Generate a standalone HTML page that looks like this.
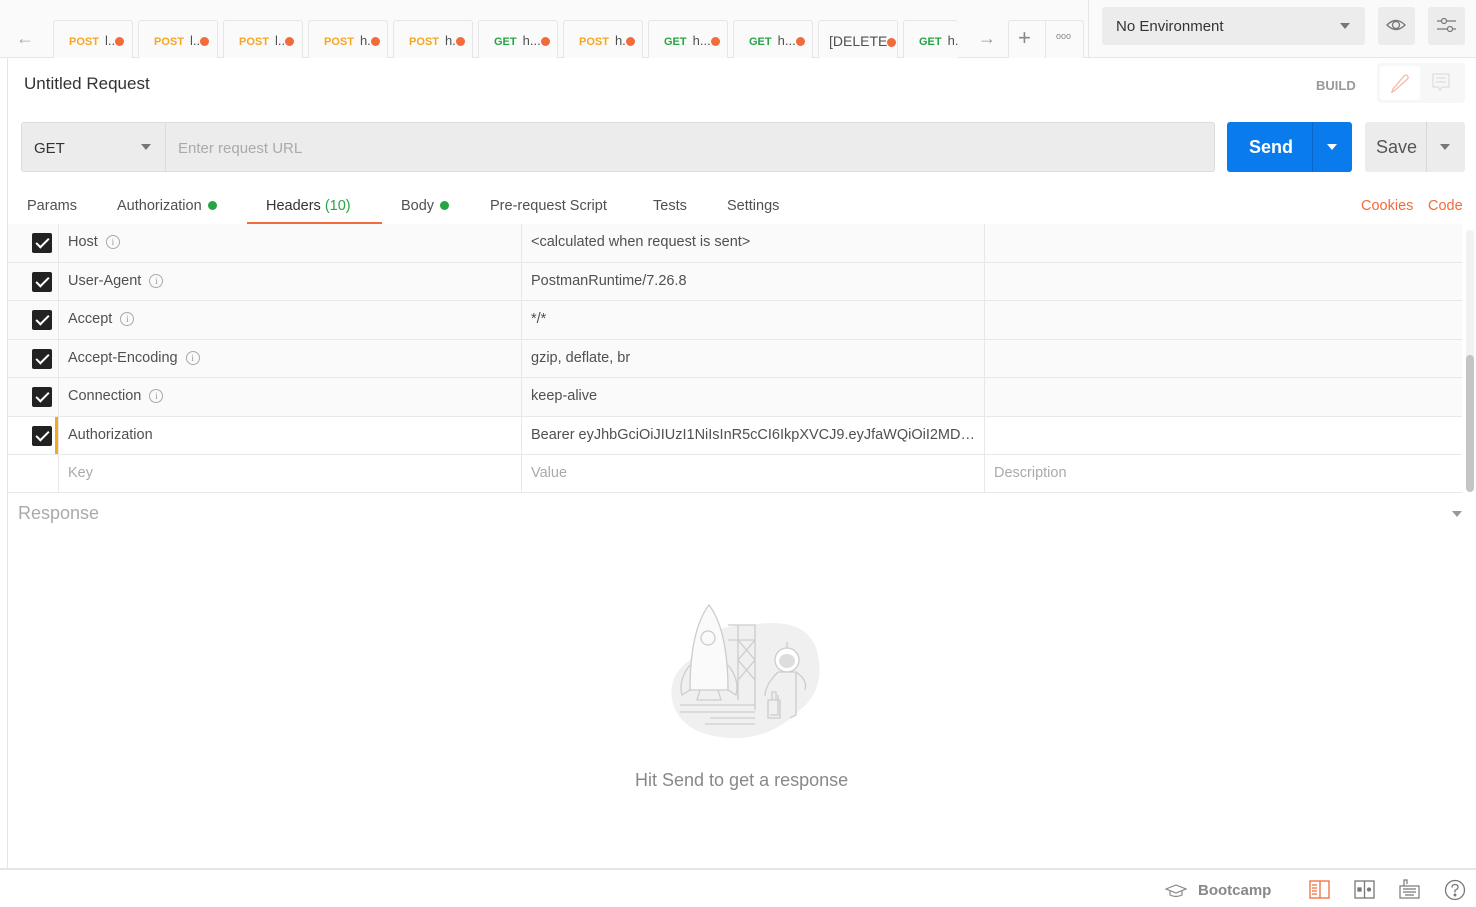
<!DOCTYPE html>
<html><head><meta charset="utf-8"><style>
*{box-sizing:border-box;margin:0;padding:0}
body{width:1476px;height:907px;overflow:hidden;background:#fff;font-family:"Liberation Sans",sans-serif;color:#505050;position:relative;font-size:14px}
.a{position:absolute}
.tab{position:absolute;top:20px;height:38px;width:80px;border:1px solid #e6e6e6;border-bottom:none;border-radius:3px 3px 0 0;background:#fafafa;font-size:13px;line-height:40px;padding-left:15px;white-space:nowrap;overflow:hidden}
.tab b{font-size:11px;margin-right:6px}
.po{color:#f5a623}.ge{color:#26a544}
.dot{display:inline-block;width:9px;height:9px;border-radius:50%;background:#f26b3a;vertical-align:-1px}
.row{position:absolute;left:8px;width:1454px;border-bottom:1px solid #e8e8e8;font-size:14.5px}
.row .k{position:absolute;left:60px;top:10px}
.row .v{position:absolute;left:523px;top:10px}
.cb{position:absolute;left:24px;top:9px;width:20px;height:20px;background:#222;border-radius:2px}
.cb:after{content:"";position:absolute;left:7px;top:2px;width:5px;height:11px;border:solid #fff;border-width:0 2.5px 2.5px 0;transform:rotate(45deg)}
.i{display:inline-block;width:14px;height:14px;border:1px solid #aaa;border-radius:50%;font-size:9px;line-height:12px;text-align:center;color:#999;margin-left:8px;vertical-align:1px;font-family:"Liberation Serif",serif}
.vl{position:absolute;top:224px;height:269px;width:1px;background:#e8e8e8}
.t{position:absolute;top:198px;font-size:14.5px}
.g{display:inline-block;width:9px;height:9px;border-radius:50%;background:#26a544;margin-left:6px;vertical-align:0}
</style></head><body>
<div class="a" style="left:0;top:0;width:1476px;height:58px;background:#fafafa;border-bottom:1px solid #e6e6e6"></div>
<div class="a" style="left:1088px;top:0;width:1px;height:58px;background:#e6e6e6"></div>
<div class="a" style="left:16px;top:28px;font-size:18px;color:#aaa">&#8592;</div>
<div class="tab" style="left:53px"><b class="po">POST</b>l..<span class="dot"></span></div>
<div class="tab" style="left:138px"><b class="po">POST</b>l..<span class="dot"></span></div>
<div class="tab" style="left:223px"><b class="po">POST</b>l..<span class="dot"></span></div>
<div class="tab" style="left:308px"><b class="po">POST</b>h.<span class="dot"></span></div>
<div class="tab" style="left:393px"><b class="po">POST</b>h.<span class="dot"></span></div>
<div class="tab" style="left:478px"><b class="ge">GET</b>h...<span class="dot"></span></div>
<div class="tab" style="left:563px"><b class="po">POST</b>h.<span class="dot"></span></div>
<div class="tab" style="left:648px"><b class="ge">GET</b>h...<span class="dot"></span></div>
<div class="tab" style="left:733px"><b class="ge">GET</b>h...<span class="dot"></span></div>
<div class="tab" style="left:818px;padding-left:10px;font-size:14px">[DELETE<span class="dot"></span></div>
<div class="tab" style="left:903px;width:55px;border-right:none"><b class="ge">GET</b>h.</div>
<div class="a" style="left:978px;top:28px;font-size:18px;color:#999">&#8594;</div>
<div class="tab" style="left:1008px;width:76px;padding:0"></div>
<div class="a" style="left:1045px;top:20px;width:1px;height:38px;background:#e6e6e6"></div>
<div class="a" style="left:1018px;top:25px;font-size:22px;color:#888;font-weight:300">+</div>
<div class="a" style="left:1056px;top:31px;font-size:9px;color:#888">ooo</div>
<div class="a" style="left:1102px;top:7px;width:263px;height:38px;background:#ececec;border-radius:3px;font-size:15px;line-height:40px;padding-left:14px;color:#333">No Environment</div>
<div class="a" style="left:1340px;top:23px;border:5px solid transparent;border-top:6px solid #777"></div>
<div class="a" style="left:1378px;top:7px;width:37px;height:38px;background:#ececec;border-radius:3px"></div>
<svg class="a" style="left:1385px;top:16px" width="22" height="18"><path d="M2 9Q11 0 20 9Q11 18 2 9Z" fill="none" stroke="#777" stroke-width="1.3"/><circle cx="11" cy="9" r="3.5" fill="none" stroke="#777" stroke-width="1.3"/></svg>
<div class="a" style="left:1428px;top:7px;width:37px;height:38px;background:#ececec;border-radius:3px"></div>
<svg class="a" style="left:1436px;top:16px" width="22" height="20"><path d="M1 5H20M1 13H20" stroke="#777" stroke-width="1.2"/><circle cx="8" cy="5" r="2.5" fill="#ececec" stroke="#777" stroke-width="1.2"/><circle cx="14" cy="13" r="2.5" fill="#ececec" stroke="#777" stroke-width="1.2"/></svg>
<div class="a" style="left:7px;top:58px;width:1px;height:811px;background:#e6e6e6"></div>
<div class="a" style="left:24px;top:74px;font-size:17px;color:#333">Untitled Request</div>
<div class="a" style="left:1316px;top:78px;font-size:13px;font-weight:bold;color:#999">BUILD</div>
<div class="a" style="left:1377px;top:63px;width:88px;height:40px;background:#f7f7f7;border-radius:3px"></div>
<div class="a" style="left:1380px;top:66px;width:40px;height:34px;background:#fff;border-radius:3px"></div>
<svg class="a" style="left:1390px;top:72px" width="20" height="22"><path d="M4 19L2 20L3 17L14 4Q16 2 17.5 4Q19 6 17 7.5Z" fill="none" stroke="#f5b9a5" stroke-width="1.3"/></svg>
<svg class="a" style="left:1432px;top:73px" width="18" height="20"><path d="M1 1H17V14H10L8 17L6 14H1Z M4 5H14M4 9H14" fill="none" stroke="#ddd" stroke-width="1.2"/></svg>
<div class="a" style="left:21px;top:122px;width:1194px;height:50px;background:#ececec;border:1px solid #dcdcdc;border-radius:3px"></div>
<div class="a" style="left:165px;top:123px;width:1px;height:48px;background:#dcdcdc"></div>
<div class="a" style="left:34px;top:140px;font-size:15px;color:#333">GET</div>
<div class="a" style="left:141px;top:144px;border:5px solid transparent;border-top:6px solid #777"></div>
<div class="a" style="left:178px;top:140px;font-size:15px;color:#aaa">Enter request URL</div>
<div class="a" style="left:1227px;top:122px;width:125px;height:50px;background:#097bed;border-radius:3px"></div>
<div class="a" style="left:1312px;top:122px;width:1px;height:50px;background:#0766c8"></div>
<div class="a" style="left:1249px;top:137px;font-size:18px;font-weight:bold;color:#fff">Send</div>
<div class="a" style="left:1327px;top:144px;border:5px solid transparent;border-top:6px solid #fff"></div>
<div class="a" style="left:1365px;top:122px;width:100px;height:50px;background:#ececec;border-radius:3px"></div>
<div class="a" style="left:1426px;top:122px;width:1px;height:50px;background:#d8d8d8"></div>
<div class="a" style="left:1376px;top:137px;font-size:18px;color:#555">Save</div>
<div class="a" style="left:1440px;top:144px;border:5px solid transparent;border-top:6px solid #777"></div>
<div class="t" style="left:27px">Params</div>
<div class="t" style="left:117px">Authorization<span class="g"></span></div>
<div class="t" style="left:266px;color:#333">Headers <span style="color:#26a544">(10)</span></div>
<div class="a" style="left:247px;top:222px;width:135px;height:4px;background:#f26b3a"></div>
<div class="t" style="left:401px">Body<span class="g"></span></div>
<div class="t" style="left:490px">Pre-request Script</div>
<div class="t" style="left:653px">Tests</div>
<div class="t" style="left:727px">Settings</div>
<div class="t" style="left:1361px;color:#f26b3a">Cookies</div>
<div class="t" style="left:1428px;color:#f26b3a">Code</div>
<div class="row" style="top:224px;height:39px;background:#fafafa"><div class="cb"></div><span class="k">Host<span class="i">i</span></span><span class="v">&lt;calculated when request is sent&gt;</span></div>
<div class="row" style="top:263px;height:38px;background:#fafafa"><div class="cb"></div><span class="k">User-Agent<span class="i">i</span></span><span class="v">PostmanRuntime/7.26.8</span></div>
<div class="row" style="top:301px;height:39px;background:#fafafa"><div class="cb"></div><span class="k">Accept<span class="i">i</span></span><span class="v">*/*</span></div>
<div class="row" style="top:340px;height:38px;background:#fafafa"><div class="cb"></div><span class="k">Accept-Encoding<span class="i">i</span></span><span class="v">gzip, deflate, br</span></div>
<div class="row" style="top:378px;height:39px;background:#fafafa"><div class="cb"></div><span class="k">Connection<span class="i">i</span></span><span class="v">keep-alive</span></div>
<div class="row" style="top:417px;height:38px"><div class="cb"></div><span class="k">Authorization</span><span class="v">Bearer eyJhbGciOiJIUzI1NiIsInR5cCI6IkpXVCJ9.eyJfaWQiOiI2MD…</span></div>
<div class="a" style="left:55px;top:417px;width:3px;height:37px;background:#f5a623"></div>
<div class="row" style="top:455px;height:38px;color:#aaa"><span class="k">Key</span><span class="v">Value</span><span class="v" style="left:986px">Description</span></div>
<div class="vl" style="left:58px"></div><div class="vl" style="left:521px"></div><div class="vl" style="left:984px"></div>
<div class="a" style="left:1466px;top:230px;width:8px;height:262px;background:#f2f2f2;border-radius:4px"></div>
<div class="a" style="left:1466px;top:355px;width:8px;height:137px;background:#c4c4c4;border-radius:4px"></div>
<div class="a" style="left:18px;top:503px;font-size:18px;color:#aaa">Response</div>
<div class="a" style="left:1452px;top:511px;border:5px solid transparent;border-top:6px solid #999"></div>
<svg class="a" style="left:660px;top:600px" width="170" height="150" fill="none" stroke="#ccc" stroke-width="1.3">
<path d="M30 60Q40 25 90 25Q150 15 158 55Q165 90 140 110Q110 140 70 138Q20 135 12 100Q8 75 30 60Z" fill="#f0f0f0" stroke="none"/>
<path d="M49 5Q30 30 30 90H68Q68 30 49 5Z" fill="#fafafa"/><circle cx="48" cy="38" r="7"/>
<path d="M30 65Q18 80 22 95L30 90M68 65Q80 80 76 95L68 90"/><path d="M40 90L37 100H61L58 90"/>
<path d="M68 25H95V110M68 40H95M20 105H95M20 112H95M50 118H95M45 124H95"/>
<path d="M78 25V100M78 40L95 60M95 40L78 60M78 60L95 80M95 60L78 80"/>
<circle cx="127" cy="60" r="12" fill="#fff"/><ellipse cx="127" cy="61" rx="8" ry="7" fill="#ddd" stroke="none"/>
<path d="M118 72Q105 85 105 96M136 72Q148 80 145 90M118 72H136V115L130 118M118 95V115H110"/>
<path d="M108 100H120V118H108Z M112 100V92H116V100"/><path d="M127 48V42"/>
</svg>
<div class="a" style="left:635px;top:770px;font-size:18px;color:#888">Hit Send to get a response</div>
<div class="a" style="left:0;top:868px;width:1476px;height:2px;background:#e6e6e6"></div>
<svg class="a" style="left:1165px;top:883px" width="22" height="16" fill="none" stroke="#888" stroke-width="1.2"><path d="M1 6L11 2L21 6L11 10Z M5 8V12Q11 15 17 12V8"/></svg>
<div class="a" style="left:1198px;top:882px;font-size:15px;font-weight:bold;color:#888">Bootcamp</div>
<svg class="a" style="left:1309px;top:880px" width="22" height="20" fill="none" stroke="#f26b3a" stroke-width="1.3"><rect x="1" y="1" width="19" height="17"/><path d="M11 1V18M3 5H8M3 8H8M3 11H8M3 14H8"/></svg>
<svg class="a" style="left:1354px;top:880px" width="22" height="20" fill="none" stroke="#777" stroke-width="1.3"><rect x="1" y="1" width="19" height="17"/><path d="M10.5 1V18"/><rect x="4" y="8" width="3" height="3" fill="#777"/><circle cx="15" cy="9.5" r="1.5" fill="#777"/></svg>
<svg class="a" style="left:1399px;top:878px" width="22" height="22" fill="none" stroke="#777" stroke-width="1.2"><path d="M5 8V2H8V6"/><rect x="1" y="8" width="19" height="12"/><path d="M4 11H17M4 14H17M6 17H15"/></svg>
<svg class="a" style="left:1444px;top:879px" width="22" height="22" fill="none" stroke="#777" stroke-width="1.3"><circle cx="11" cy="11" r="9.5"/><path d="M8 8.5Q8 5.5 11 5.5Q14 5.5 14 8.3Q14 10 11 11.3V13.5"/><circle cx="11" cy="16" r=".8" fill="#777"/></svg>
</body></html>
